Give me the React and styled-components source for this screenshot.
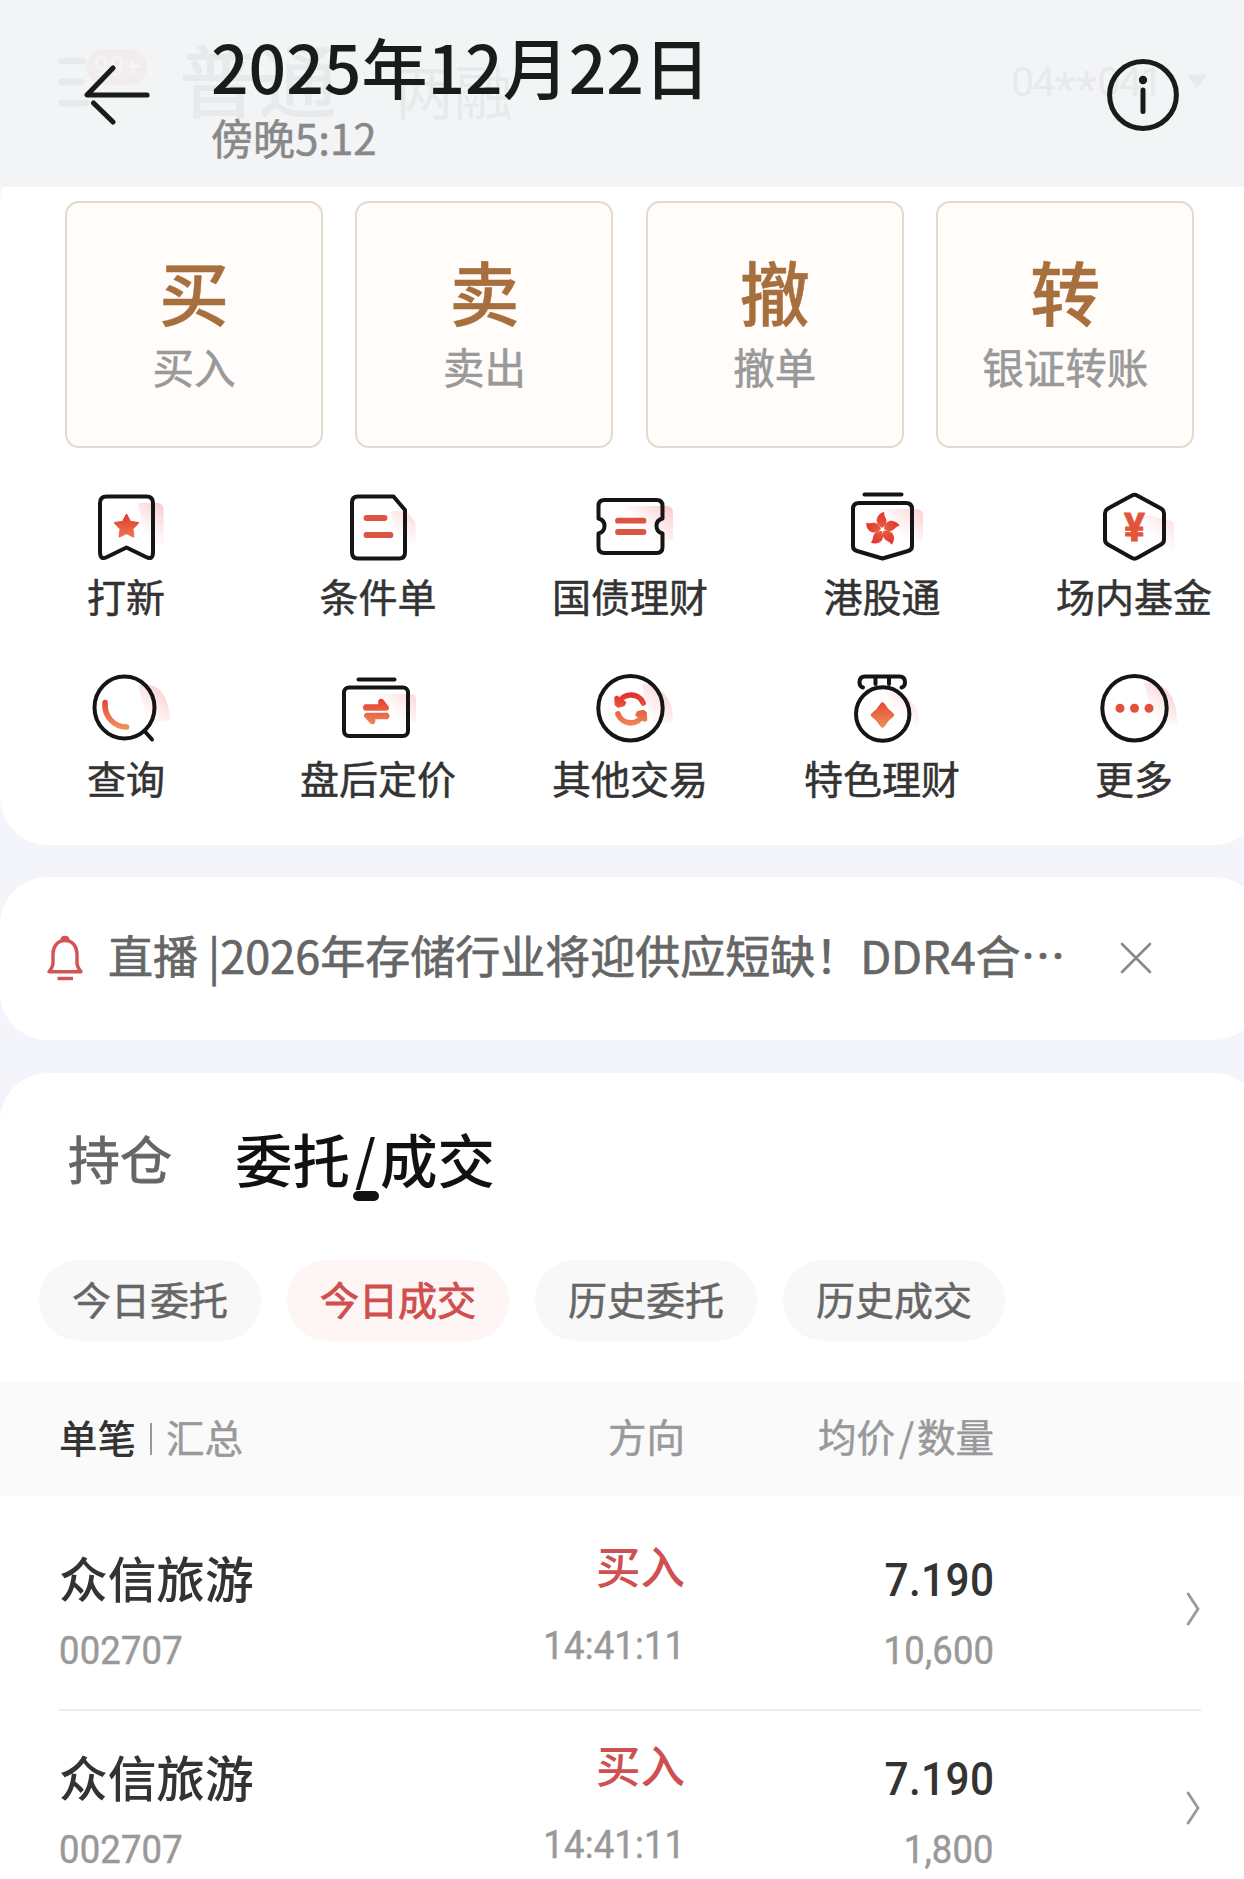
import React from 'react'
import styled, { createGlobalStyle } from 'styled-components'

const App = () => {
    return (
        <>
            <GlobalStyle />
            <Screen>
                <AccountBar>
                    <MenuIcon />
                    <MenuBadge>99+</MenuBadge>
                    <AccountTab>普通</AccountTab>
                    <AccountSubTab>两融</AccountSubTab>
                    <AccountNumber>04<i>**</i>041</AccountNumber>
                    <Caret viewBox='0 0 22 16'><path d='M2 1h18L11 14z' fill='#444' stroke='#444' strokeLinejoin='round' /></Caret>
                </AccountBar>

                <TradeCard>
                    <Actions>
                        {actions.map((action) => (
                            <Action key={action.mark}>
                                <ActionMark>{action.mark}</ActionMark>
                                <ActionLabel>{action.label}</ActionLabel>
                            </Action>
                        ))}
                    </Actions>
                    <Shortcuts>
                        {shortcuts.map(({ label, icon }) => (
                            <Shortcut key={label}>
                                <ShortcutIcon viewBox='0 0 80 80'>{icon}</ShortcutIcon>
                                <ShortcutLabel>{label}</ShortcutLabel>
                            </Shortcut>
                        ))}
                    </Shortcuts>
                </TradeCard>

                <NoticeCard>
                    <Bell />
                    <NoticeText>直播 |2026年存储行业将迎供应短缺！DDR4合…</NoticeText>
                    <Close viewBox='0 0 32 32'>
                        <path d='M2 2l28 28M30 2L2 30' />
                    </Close>
                </NoticeCard>

                <OrdersCard>
                    <Tabs>
                        <Tab>持仓</Tab>
                        <ActiveTab>委托<i>/</i>成交</ActiveTab>
                    </Tabs>
                    <Chips>
                        {chips.map((chip) => (
                            <Chip key={chip} $active={chip === '今日成交'}>{chip}</Chip>
                        ))}
                    </Chips>
                    <TableHead>
                        <Modes><b>单笔</b><ModeLine /><span>汇总</span></Modes>
                        <HeadCell>方向</HeadCell>
                        <HeadCell>均价<i>/</i>数量</HeadCell>
                    </TableHead>
                    {orders.map((order, i) => (
                        <Order key={i}>
                            <Cell>
                                <Name>{order.name}</Name>
                                <Digits>{order.code}</Digits>
                            </Cell>
                            <SideCell>
                                <Side>{order.side}</Side>
                                <Digits $right>{order.time}</Digits>
                            </SideCell>
                            <Cell $right>
                                <Price>{order.price}</Price>
                                <Digits $right>{order.amount}</Digits>
                            </Cell>
                            <Chevron viewBox='0 0 14 34'>
                                <path d='M1.5 1L12 17 1.5 33' />
                            </Chevron>
                        </Order>
                    ))}
                </OrdersCard>

                <TopBar>
                    <BackArrow viewBox='0 0 68 62'>
                        <path d='M30 4L4 31h60M10.500 39L30 58' />
                    </BackArrow>
                    <DateBlock>
                        <DateTitle>2025年12月22日</DateTitle>
                        <DateTime>傍晚5:12</DateTime>
                    </DateBlock>
                    <InfoIcon viewBox='0 0 72 72'>
                        <circle cx='36' cy='36' r='33.4' />
                        <path d='M36 31v21.500' />
                        <circle cx='36' cy='21' r='4.200' className='dot' />
                    </InfoIcon>
                </TopBar>
            </Screen>
        </>
    )
}

const MenuIcon = () => (
    <MenuSvg viewBox='0 0 32 50'>
        <path d='M3 4h22M3 25h20M3 46h25' />
    </MenuSvg>
)

const Bell = () => (
    <BellSvg viewBox='0 0 38 48'>
        <path d='M19 5.500C11 5.500 7 12 7 19v9c0 4-2 6-4 8.700h32c-2-2.700-4-4.700-4-8.700v-9c0-7-4-13.500-12-13.500z' />
        <path d='M16 5.500c0-4 6-4 6 0' />
        <path d='M11.500 43.500h15.500' />
    </BellSvg>
)

// shared paints for the shortcut icons
const Paints = () => (
    <defs>
        <linearGradient id='ember' gradientUnits='userSpaceOnUse' x1='40' y1='25' x2='40' y2='60'>
            <stop offset='0' stopColor='#e02f2c' />
            <stop offset='1' stopColor='#f09058' />
        </linearGradient>
        <linearGradient id='blush' gradientUnits='userSpaceOnUse' x1='80' y1='22' x2='55' y2='50'>
            <stop offset='0' stopColor='#f5a8ac' stopOpacity='0.6' />
            <stop offset='1' stopColor='#fbd5d7' stopOpacity='0' />
        </linearGradient>
    </defs>
)

const shortcuts = [
    {
        label: '打新',
        icon: (
            <>
                <Paints />
                <path className='blush' d='M52 17h19q6.500 0 6.500 7v34H60z' />
                <path d='M20.500 10.500h40q6.500 0 6.500 6.500v49q0 8.500-7 5L40.500 61.500 21 71q-7 3.500-7-5V17q0-6.500 6.500-6.500z' />
                <path className='fill round' d='M40.500 28.500l3.700 7 8 1.400-5.600 5.900 1.100 8-7.200-3.500-7.200 3.500 1.100-8-5.600-5.900 8-1.400z' />
            </>
        ),
    },
    {
        label: '条件单',
        icon: (
            <>
                <path className='blush' d='M52 25h16l9.500 11v22H60z' />
                <path d='M20 10.500h35.500L67 24v42.500q0 6-6 6H20q-6 0-6-6v-50q0-6 6-6z' />
                <path className='accent' d='M28.500 32h18M28.500 49h24' />
            </>
        ),
    },
    {
        label: '国债理财',
        icon: (
            <>
                <path className='blush' d='M36 20h40q7 0 7 7v27H60z' />
                <path d='M14.500 14h52q6 0 6 6v12.500c-8 2-8 13 0 15V61q0 6-6 6h-52q-6 0-6-6V47.500c8-2 8-13 0-15V20q0-6 6-6z' />
                <path className='accent' d='M28 34.700h25.500M28 46h25.500' />
            </>
        ),
    },
    {
        label: '港股通',
        icon: (
            <>
                <path className='blush' d='M34 23h40q7 0 7 7v24H58z' />
                <path d='M22.500 8.500h37' />
                <path d='M17 17h47q6 0 6 6v37q0 4-4 5L40.500 72.500 15 65q-4-1-4-5V23q0-6 6-6z' />
                {[0, 72, 144, 216, 288].map((angle) => (
                    <path
                        key={angle}
                        className='fill'
                        transform={`rotate(${angle} 40.500 43.500)`}
                        d='M40 42c-5-3.500-6.500-7-4.500-11 1.500-3 4-4.500 6.800-5-1 3.500 2.200 5.500 2.200 9.500 0 3-2 5-4.500 6.500z'
                    />
                ))}
            </>
        ),
    },
    {
        label: '场内基金',
        icon: (
            <>
                <path className='blush' d='M42 26l35 9q3 1 3 5v30H58z' />
                <path d='M37.500 9.800q3-2 6 0L67 22.500q3 1.700 3 5v26q0 3.300-3 5L43.500 71.700q-3 2-6 0L14 58.500q-3-1.700-3-5v-26q0-3.300 3-5z' />
                <text x='40.500' y='54.500'>¥</text>
            </>
        ),
    },
    {
        label: '查询',
        icon: (
            <>
                <path className='blush' d='M52 17c17-4 32 8 31.500 35L62 56z' />
                <ellipse cx='38.500' cy='39.500' rx='30' ry='31' />
                <path d='M58.500 63l7.500 8.500' />
                <path className='arc' d='M19 34.500c-1 14 9 24.500 21.500 24.500' />
            </>
        ),
    },
    {
        label: '盘后定价',
        icon: (
            <>
                <path className='blush' d='M36 26h36q6 0 6 6v22H56z' />
                <path d='M20.500 11.500h36' />
                <rect x='6' y='19.500' width='64' height='48.500' rx='5' />
                <path className='fill round' d='M27 37h14v-4q1-2.500 3.500-1l5.500 7q1 2.500-2 3H27q-2.500-2.500 0-5zM49.500 45.500q2.500 2.500 0 5H36.500v3.500q-1 2.500-3.500 1l-6-6.500q-1-2.500 2-3z' />
            </>
        ),
    },
    {
        label: '其他交易',
        icon: (
            <>
                <path className='blush' d='M52 16c17 0 31 12 31 37L62 58z' />
                <circle cx='40.500' cy='40.200' r='32.200' />
                <path className='arc' d='M28.500 35.500c4-11 20-11.500 24.700-.5M28 46c4 11.500 20.500 12 25 .5' />
                <path className='fill round' d='M25 29.500l2-1 8.500 6-1.500 3-6 1.500-2.500-2zM56.500 52l-2 1-8.500-6 1.500-3 6-1.500 2.500 2z' />
            </>
        ),
    },
    {
        label: '特色理财',
        icon: (
            <>
                <path className='blush' d='M44 25c19-2 33 8 33.500 34L62 62z' />
                <path d='M21 19.500q-3.500-1-3.500-5 0-6 5.500-6h34.500q5.500 0 5.500 6 0 4-3.500 5M33.500 9v7M47 9v7' />
                <ellipse cx='40.700' cy='46' rx='26.700' ry='26.700' />
                <path className='fill' d='M38.500 35.500q2-2.500 4 0 3.500 6 8.500 9.500 2.500 2 0 4-5 3.500-8.500 9.500-2 2.500-4 0-3.500-6-8.500-9.500-2.500-2 0-4 5-3.500 8.500-9.500z' />
            </>
        ),
    },
    {
        label: '更多',
        icon: (
            <>
                <path className='blush' d='M50 15c19-2 33 10 33 40L62 58z' />
                <circle cx='40.500' cy='40.200' r='32.200' />
                <circle className='dot' cx='26' cy='40.200' r='4.500' />
                <circle className='dot' cx='40.500' cy='40.200' r='4.500' />
                <circle className='dot' cx='55' cy='40.200' r='4.500' />
            </>
        ),
    },
]

const actions = [
    { mark: '买', label: '买入' },
    { mark: '卖', label: '卖出' },
    { mark: '撤', label: '撤单' },
    { mark: '转', label: '银证转账' },
]

const chips = ['今日委托', '今日成交', '历史委托', '历史成交']

const orders = [
    { name: '众信旅游', code: '002707', side: '买入', time: '14:41:11', price: '7.190', amount: '10,600' },
    { name: '众信旅游', code: '002707', side: '买入', time: '14:41:11', price: '7.190', amount: '1,800' },
]

const GlobalStyle = createGlobalStyle`
    * {
        box-sizing: border-box;
    }
    body {
        margin: 0;
        background: #f3f5fa;
        font-family: 'Noto Sans CJK SC', sans-serif;
    }
    i {
        font-style: normal;
    }
`

const Screen = styled.div`
    position: relative;
    width: 1244px;
    height: 1879px;
    overflow: hidden;
    background: #f3f5fa;
`

const AccountBar = styled.div`
    display: flex;
    align-items: center;
    height: 154px;
    padding: 9px 0 0 58px;
    color: #444;
    white-space: nowrap;
`

const MenuSvg = styled.svg`
    width: 32px;
    height: 50px;
    flex: none;
    fill: none;
    stroke: #444;
    stroke-width: 6.5;
    stroke-linecap: round;
`

const MenuBadge = styled.div`
    width: 60px;
    height: 36px;
    margin: -30px 0 0 -3px;
    border-radius: 18px;
    background: #ff6a50;
    color: #fff;
    font: 500 28px/36px Roboto, sans-serif;
    text-align: center;
    position: relative;
`

const AccountTab = styled.div`
    margin: -7px 0 0 32px;
    font-size: 79px;
    font-weight: 500;
    line-height: 90px;
`

const AccountSubTab = styled.div`
    margin: 16px 0 0 58px;
    font-size: 59px;
    line-height: 70px;
`

const AccountNumber = styled.div`
    width: 162px;
    margin-left: auto;
    font: 400 41px/50px Roboto, sans-serif;
    letter-spacing: -1.500px;
    i {
        font-size: 50px;
        line-height: 30px;
        vertical-align: -11px;
        letter-spacing: 0;
    }
`

const Caret = styled.svg`
    width: 22px;
    height: 16px;
    margin: 0 36px 0 13px;
`

const TopBar = styled.header`
    position: absolute;
    top: 0;
    left: 0;
    display: flex;
    width: 1244px;
    height: 187px;
    padding: 22px 65px 0 83px;
    background: rgba(241, 243, 245, 0.945);
`

const BackArrow = styled.svg`
    width: 68px;
    height: 62px;
    margin-top: 42px;
    fill: none;
    stroke: #1a1c1c;
    stroke-width: 5.2;
    stroke-linecap: round;
    stroke-linejoin: round;
`

const DateBlock = styled.div`
    flex: 1;
    margin-left: 60px;
    padding-top: 3px;
    white-space: nowrap;
`

const DateTitle = styled.div`
    color: #1a1c1c;
    font-size: 66px;
    font-weight: 500;
    line-height: 80px;
`

const DateTime = styled.div`
    margin-top: 7px;
    color: #888;
    font-size: 42px;
    line-height: 50px;
    -webkit-text-stroke: 0.5px;
`

const InfoIcon = styled.svg`
    width: 72px;
    height: 72px;
    margin-top: 37px;
    fill: none;
    stroke: #1a1c1c;
    stroke-width: 5;
    stroke-linecap: round;
    .dot {
        fill: #1a1c1c;
        stroke: none;
    }
`

/* cards run slightly past the right edge of the screen */
const CardBase = styled.section`
    width: 1262px;
    border-radius: 48px;
    background: #fff;
`

const TradeCard = styled(CardBase)`
    height: 691px;
    padding-top: 47px;
`

const Actions = styled.div`
    display: grid;
    grid-template-columns: repeat(4, 258px);
    gap: 32.4px;
    padding-left: 65px;
`

const Action = styled.div`
    height: 247px;
    padding-top: 48px;
    border: 2px solid #e3dacf;
    border-radius: 14px;
    background: #fffcf9;
    text-align: center;
`

const ActionMark = styled.div`
    color: #a76f3e;
    font-size: 70px;
    font-weight: 500;
    line-height: 80px;
    -webkit-text-stroke: 0.5px;
`

const ActionLabel = styled.div`
    margin-top: 10px;
    color: #999;
    font-size: 41.5px;
    line-height: 50px;
    -webkit-text-stroke: 0.6px;
`

const Shortcuts = styled.div`
    display: grid;
    grid-template-columns: repeat(5, 252px);
    grid-auto-rows: 182px;
    padding-top: 38px;
`

const Shortcut = styled.div`
    display: flex;
    flex-direction: column;
    align-items: center;
`

const ShortcutIcon = styled.svg`
    width: 80px;
    height: 80px;
    overflow: visible;
    fill: none;
    stroke: #151515;
    stroke-width: 4;
    stroke-linecap: round;
    stroke-linejoin: round;
    .blush {
        fill: url(#blush);
        stroke: none;
    }
    .fill {
        fill: url(#ember);
        stroke: none;
    }
    .round {
        stroke: url(#ember);
        stroke-width: 1.6;
    }
    .arc {
        stroke: url(#ember);
        stroke-width: 5.6;
    }
    .accent {
        stroke: #dc5540;
        stroke-width: 5.8;
    }
    .dot {
        fill: #e0523c;
        stroke: none;
    }
    text {
        fill: #e2553a;
        stroke: #e2553a;
        stroke-width: 1;
        font: 700 39px Roboto, sans-serif;
        text-anchor: middle;
    }
`

const ShortcutLabel = styled.div`
    margin-top: 3px;
    color: #333;
    font-size: 39px;
    line-height: 52px;
    white-space: nowrap;
    -webkit-text-stroke: 0.5px;
`

const NoticeCard = styled(CardBase)`
    display: flex;
    align-items: center;
    height: 163px;
    margin-top: 32px;
    padding-left: 46px;
`

const BellSvg = styled.svg`
    width: 38px;
    height: 48px;
    fill: none;
    stroke: #d25454;
    stroke-width: 3.4;
    stroke-linejoin: round;
`

const NoticeText = styled.div`
    width: 990px;
    margin: -7px 0 0 24px;
    color: #666;
    font-size: 45px;
    line-height: 60px;
    white-space: nowrap;
    -webkit-text-stroke: 0.7px;
`

const Close = styled.svg`
    width: 32px;
    height: 32px;
    margin: -2px 0 0 22px;
    fill: none;
    stroke: #888;
    stroke-width: 2.6;
    stroke-linecap: round;
`

const OrdersCard = styled(CardBase)`
    height: 900px;
    margin-top: 33px;
`

const Tabs = styled.div`
    display: flex;
    align-items: center;
    height: 187px;
    padding: 0 0 18px 68px;
`

const Tab = styled.div`
    color: #666;
    font-size: 52px;
    line-height: 70px;
    -webkit-text-stroke: 0.8px;
`

const ActiveTab = styled.div`
    position: relative;
    margin-left: 63px;
    color: #111;
    font-size: 57.5px;
    font-weight: 500;
    line-height: 70px;
    i {
        margin: 0 4px 0 5px;
        font-size: 54px;
        line-height: 50px;
        vertical-align: 3px;
    }
    &::after {
        content: '';
        position: absolute;
        left: 118px;
        bottom: -8px;
        width: 26px;
        height: 10px;
        border-radius: 5px;
        background: #111;
    }
`

const Chips = styled.div`
    display: flex;
    gap: 26px;
    padding-left: 39px;
`

const Chip = styled.div`
    width: 222px;
    height: 81px;
    border-radius: 41px;
    background: ${({ $active }) => ($active ? '#fef6f4' : '#f8f8f8')};
    color: ${({ $active }) => ($active ? '#cf4e4e' : '#666')};
    font-size: 39px;
    line-height: 76px;
    text-align: center;
    -webkit-text-stroke: ${({ $active }) => ($active ? '0.9px' : '0.5px')};
`

const TableHead = styled.div`
    display: grid;
    grid-template-columns: 190px 436px 309px;
    height: 114px;
    margin-top: 41px;
    padding: 0 0 5px 59px;
    background: #fafafa;
    color: #999;
    font-size: 38.5px;
    line-height: 107px;
    white-space: nowrap;
    -webkit-text-stroke: 0.5px;
`

const Modes = styled.div`
    display: flex;
    align-items: center;
    b {
        color: #333;
        font-weight: 500;
        -webkit-text-stroke: 0;
    }
`

const ModeLine = styled.div`
    width: 2px;
    height: 32px;
    margin: 4px 14px 0;
    background: #999;
`

const HeadCell = styled.div`
    text-align: right;
    i {
        margin: 0 3px 0 4px;
    }
`

const Order = styled.div`
    display: grid;
    grid-template-columns: 317px 309px 309px 207px;
    width: 1142px;
    height: 199px;
    margin-left: 59px;
    border-bottom: 2px solid #ececec;
    ${TableHead} + & {
        margin-top: 16px;
    }
`

const Cell = styled.div`
    display: flex;
    flex-direction: column;
    align-items: ${({ $right }) => ($right ? 'flex-end' : 'flex-start')};
    padding-top: 35px;
    white-space: nowrap;
`

const SideCell = styled(Cell)`
    align-items: flex-end;
    padding-top: 23px;
`

const Name = styled.div`
    color: #333;
    font-size: 48.7px;
    font-weight: 500;
    line-height: 60px;
`

const Side = styled.div`
    color: #cf5050;
    font-size: 44.5px;
    font-weight: 500;
    line-height: 60px;
    margin-bottom: 7px;
`

const Digits = styled.div`
    margin-top: 21px;
    color: #999;
    font: 400 39.6px/46px Roboto, sans-serif;
    letter-spacing: 0.2px;
    transform: scaleX(0.92);
    transform-origin: ${({ $right }) => ($right ? 'right' : 'left')};
    -webkit-text-stroke: 0.5px;
`

const Price = styled.div`
    margin: 3px 0 -3px;
    color: #333;
    font: 500 46px/60px Roboto, sans-serif;
    letter-spacing: 0.4px;
    transform: scaleX(0.92);
    transform-origin: right;
`

const Chevron = styled.svg`
    width: 14px;
    height: 34px;
    margin: 80px 1px 0 auto;
    fill: none;
    stroke: #999;
    stroke-width: 2.8;
`

export default App
